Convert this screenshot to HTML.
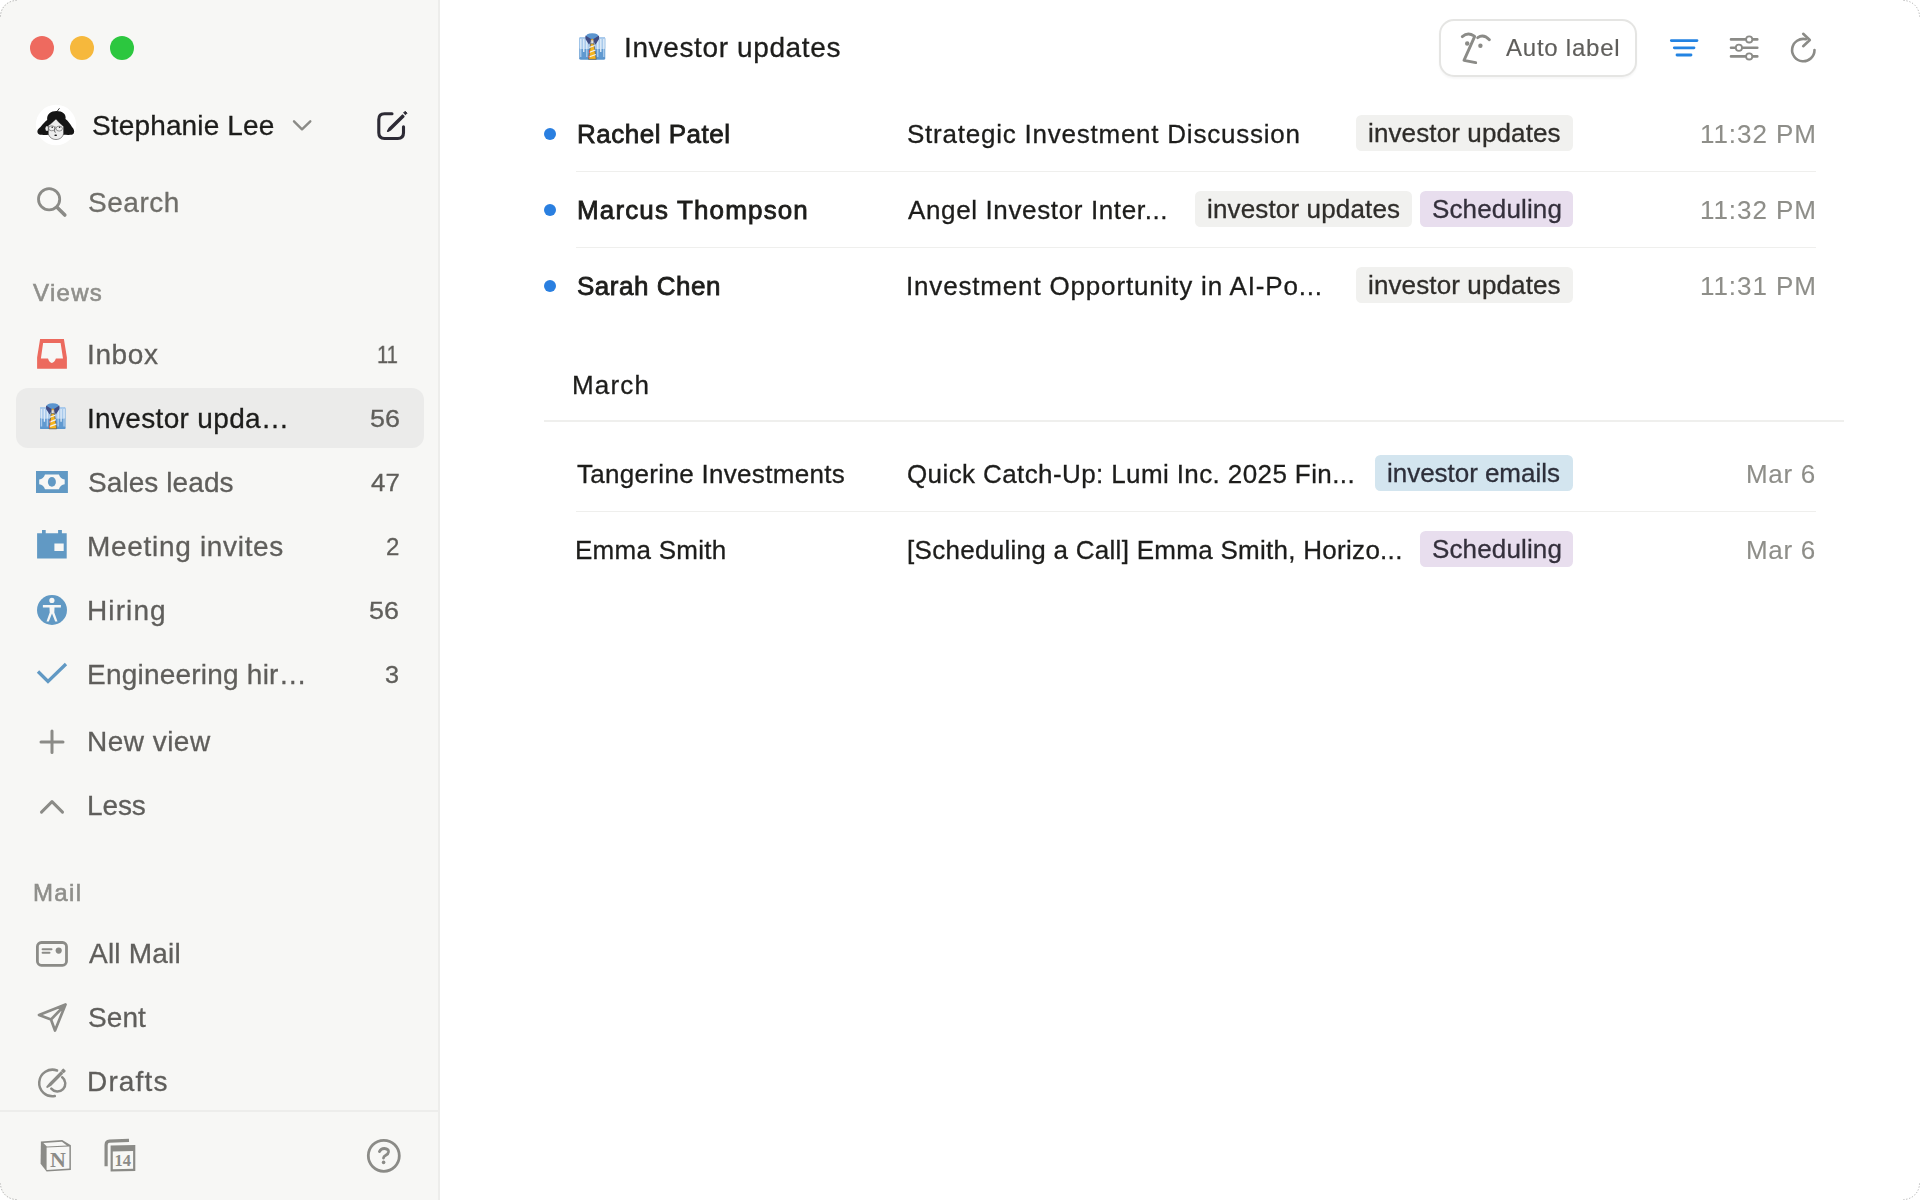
<!DOCTYPE html>
<html><head><meta charset="utf-8">
<style>
html,body{margin:0;padding:0;width:1920px;height:1200px;overflow:hidden;background:#ffffff;}
body{font-family:"Liberation Sans",sans-serif;position:relative;}
.win{position:absolute;left:0;top:0;width:1920px;height:1200px;border-radius:16px;overflow:hidden;background:#fff;}
.side{position:absolute;left:0;top:0;width:438px;height:1200px;background:#f7f7f5;border-right:2px solid #ededeb;}
.t{position:absolute;white-space:nowrap;will-change:transform;}
.abs{position:absolute;}
svg{position:absolute;overflow:visible;}
</style></head><body>
<div class="win">
<div class="side"></div>
<div class="abs" style="left:30px;top:36px;width:24px;height:24px;border-radius:50%;background:#ee6a5f;"></div>
<div class="abs" style="left:70px;top:36px;width:24px;height:24px;border-radius:50%;background:#f6b83c;"></div>
<div class="abs" style="left:110px;top:36px;width:24px;height:24px;border-radius:50%;background:#2cc73f;"></div>
<svg style="left:36px;top:105px" width="40" height="40" viewBox="0 0 40 40">
<circle cx="20" cy="20" r="20.2" fill="#ffffff"/>
<path d="M11.2 15 C10.5 9 15 6 20.5 6 C26.5 6 30.5 9 29.5 14 C32 16 34 18.5 36 22 C38 24 38.8 26.5 37.8 28.2 C37 29.6 35.5 30 34 29.8 C32 30.3 30 29.8 27.5 29.8 L12.5 29.8 C10.5 30 8 30.3 6 29.8 C3.5 30 2 29 1.5 27.5 C0.8 25.5 2.5 23.5 4.5 22 C7 19 9 16.5 11.2 15 Z" fill="#151515"/>
<ellipse cx="11" cy="23.5" rx="1.6" ry="2.6" fill="#ececec"/>
<path d="M20 14 C17.5 16 15 19 12.3 20.5 L12.3 28.5 C13 32 16 34.5 20 34.5 C24 34.5 27 32 27.6 28.5 L27.6 21.5 C25 19.5 22 16.5 20 14 Z" fill="#ececec" stroke="#222" stroke-width="0.5"/>
<ellipse cx="15.8" cy="23.3" rx="3.2" ry="2.5" fill="none" stroke="#555" stroke-width="0.6"/>
<ellipse cx="23.2" cy="23.6" rx="3.2" ry="2.5" fill="none" stroke="#555" stroke-width="0.6"/>
<circle cx="16.2" cy="22.2" r="0.8" fill="#222"/><circle cx="23.6" cy="22.2" r="0.8" fill="#222"/>
<path d="M19.2 21.5 L18.4 26.8 L20 27.3" fill="none" stroke="#333" stroke-width="0.6"/>
<ellipse cx="19.7" cy="30.2" rx="1.4" ry="0.8" fill="#111"/>
<path d="M21 6.5 L23.5 3.2" stroke="#222" stroke-width="0.9"/>
</svg>
<div class="t" style="left:92.3px;top:111.50px;font-size:28px;line-height:28px;color:#1d1d1b;font-weight:400;letter-spacing:0.142px;-webkit-text-stroke:0.3px #1d1d1b;">Stephanie Lee</div>
<svg style="left:290px;top:115px" width="24" height="20" viewBox="290 115 24 20"><path d="M294 121.3 L302 129.3 L310.3 121.3" fill="none" stroke="#8b8b87" stroke-width="2.4" stroke-linecap="round" stroke-linejoin="round"/></svg>
<svg style="left:370px;top:105px" width="44" height="44" viewBox="370 105 44 44">
<path d="M392 113.8 L384.5 113.8 Q378.8 113.8 378.8 119.5 L378.8 132.8 Q378.8 138.5 384.5 138.5 L397.8 138.5 Q403.5 138.5 403.5 132.8 L403.5 126.7" fill="none" stroke="#2d2b35" stroke-width="3.1" stroke-linecap="round"/>
<path d="M402.5 115.3 L389.3 128.5 L387.8 131.2 L390.5 129.7 L403.7 116.5 Z" fill="#2d2b35" stroke="#2d2b35" stroke-width="1.8" stroke-linejoin="round"/>
<path d="M405.2 111.3 L407 113.2 L405.5 114.7 L403.6 112.9 Z" fill="#2d2b35" stroke="#2d2b35" stroke-width="1"/>
</svg>
<svg style="left:30px;top:180px" width="45" height="45" viewBox="30 180 45 45">
<circle cx="49.1" cy="199.3" r="10.6" fill="none" stroke="#8b8b87" stroke-width="2.8"/>
<path d="M57 207.3 L64.8 215" stroke="#8b8b87" stroke-width="3.6" stroke-linecap="round"/>
</svg>
<div class="t" style="left:87.6px;top:188.60px;font-size:28px;line-height:28px;color:#6f6e69;font-weight:400;letter-spacing:0.54px;-webkit-text-stroke:0.3px #6f6e69;">Search</div>
<div class="t" style="left:33px;top:281.08px;font-size:24px;line-height:24px;color:#8f8f8b;font-weight:400;letter-spacing:1.312px;-webkit-text-stroke:0.6px #8f8f8b;">Views</div>
<div class="abs" style="left:16px;top:388px;width:408px;height:60px;border-radius:12px;background:#ebebea;"></div>
<div class="t" style="left:87.2px;top:340.90px;font-size:28px;line-height:28px;color:#5f5e5b;font-weight:400;letter-spacing:0.625px;-webkit-text-stroke:0.3px #5f5e5b;">Inbox</div>
<div class="t" style="left:377.1608695652174px;top:342.68px;font-size:24px;line-height:24px;color:#5f5e5a;font-weight:400;letter-spacing:0px;-webkit-text-stroke:0.3px #5f5e5a;transform:scaleX(0.839);transform-origin:0 0;">11</div>
<div class="t" style="left:87.2px;top:404.90px;font-size:28px;line-height:28px;color:#1d1d1b;font-weight:400;letter-spacing:0.331px;-webkit-text-stroke:0.3px #1d1d1b;">Investor upda…</div>
<div class="t" style="left:369.58px;top:406.68px;font-size:24px;line-height:24px;color:#5f5e5a;font-weight:400;letter-spacing:0px;-webkit-text-stroke:0.3px #5f5e5a;transform:scaleX(1.120);transform-origin:0 0;">56</div>
<div class="t" style="left:88.2px;top:468.90px;font-size:28px;line-height:28px;color:#5f5e5b;font-weight:400;letter-spacing:0.08px;-webkit-text-stroke:0.3px #5f5e5b;">Sales leads</div>
<div class="t" style="left:371.0px;top:470.68px;font-size:24px;line-height:24px;color:#5f5e5a;font-weight:400;letter-spacing:0px;-webkit-text-stroke:0.3px #5f5e5a;transform:scaleX(1.077);transform-origin:0 0;">47</div>
<div class="t" style="left:87.2px;top:532.90px;font-size:28px;line-height:28px;color:#5f5e5b;font-weight:400;letter-spacing:0.686px;-webkit-text-stroke:0.3px #5f5e5b;">Meeting invites</div>
<div class="t" style="left:385.6px;top:534.68px;font-size:24px;line-height:24px;color:#5f5e5a;font-weight:400;letter-spacing:0px;-webkit-text-stroke:0.3px #5f5e5a;transform:scaleX(1.000);transform-origin:0 0;">2</div>
<div class="t" style="left:87.2px;top:596.90px;font-size:28px;line-height:28px;color:#5f5e5b;font-weight:400;letter-spacing:1.1px;-webkit-text-stroke:0.3px #5f5e5b;">Hiring</div>
<div class="t" style="left:369.48px;top:598.68px;font-size:24px;line-height:24px;color:#5f5e5a;font-weight:400;letter-spacing:0px;-webkit-text-stroke:0.3px #5f5e5a;transform:scaleX(1.120);transform-origin:0 0;">56</div>
<div class="t" style="left:87.2px;top:660.90px;font-size:28px;line-height:28px;color:#5f5e5b;font-weight:400;letter-spacing:0.22px;-webkit-text-stroke:0.3px #5f5e5b;">Engineering hir…</div>
<div class="t" style="left:384.95px;top:662.68px;font-size:24px;line-height:24px;color:#5f5e5a;font-weight:400;letter-spacing:0px;-webkit-text-stroke:0.3px #5f5e5a;transform:scaleX(1.050);transform-origin:0 0;">3</div>
<svg style="left:30px;top:332px" width="45" height="45" viewBox="30 332 45 45">
<path d="M40.1 339.1 L63.9 339.1 L66.9 357.5 L66.9 368.7 L37.1 368.7 L37.1 357.5 Z M43.1 342.9 L40.9 358.6 L48 358.6 Q49.5 362.9 51.8 362.9 Q54.2 362.9 55.9 358.6 L63 358.6 L60.6 342.9 Z" fill="#ec6a5e" fill-rule="evenodd"/>
</svg>
<svg style="left:40px;top:402.5px" width="25.5" height="26.5" viewBox="0 0 26 27">
<rect x="0" y="4" width="26" height="22.5" rx="1.8" fill="#6099d0"/>
<rect x="0" y="4" width="26" height="12" rx="1.5" fill="#a9caec"/>
<path d="M1.5 6 v10 M4.5 6 v13 M7.5 7 v9 M18.5 7 v9 M21.5 6 v13 M24.5 6 v10" stroke="#dceaf7" stroke-width="1.4"/>
<path d="M1.5 16 v8 M7.5 16 v8 M18.5 16 v8 M24.5 16 v8" stroke="#a9caec" stroke-width="1.4"/>
<rect x="0" y="24.8" width="26" height="1.7" rx="0.8" fill="#5b96ce"/>
<path d="M6.2 4.5 Q6.5 0.2 13 0.2 Q19.5 0.2 19.8 4.5 L13 7 Z" fill="#5b95cf"/>
<path d="M6.2 2.6 L12.6 6.6 L9.8 11.8 L6.2 6 Z M19.8 2.6 L13.4 6.6 L16.2 11.8 L19.8 6 Z" fill="#404b82"/>
<path d="M11.4 10.5 L14.6 10.5 L17 26.3 L9.3 26.3 Z" fill="#f5b51d" stroke="#5a5a5a" stroke-width="0.7"/>
<path d="M10 14.5 L15.5 12.5 M9.7 19.5 L16.2 17 M9.5 24 L16.6 21.5" stroke="#eef2f8" stroke-width="1.3"/>
<path d="M10.2 17 L10.2 20 M9.8 22.5 L9.8 25" stroke="#e84a3c" stroke-width="0.9"/>
<path d="M11.6 6.4 L14.4 6.4 L14.6 10.8 L11.4 10.8 Z" fill="#dedede" stroke="#5a5a5a" stroke-width="0.6"/>
<circle cx="13" cy="6.6" r="0.9" fill="#f0a020"/>
</svg>
<svg style="left:30px;top:460px" width="45" height="45" viewBox="30 460 45 45">
<path d="M36 470.9 L67.9 470.9 L67.9 493 L36 493 Z M45 474.4 Q43.5 478.8 39.2 479.5 L39.2 484.2 Q43.5 484.8 45 489.2 L58.9 489.2 Q60.4 484.8 64.7 484.2 L64.7 479.5 Q60.4 478.8 58.9 474.4 Z" fill="#6199c4" fill-rule="evenodd"/>
<ellipse cx="51.9" cy="481.9" rx="4" ry="4.8" fill="#6199c4"/>
</svg>
<svg style="left:30px;top:522px" width="45" height="45" viewBox="30 522 45 45">
<path d="M37.1 533.2 L42 533.2 L42 529.9 L45.7 529.9 L45.7 533.2 L58.1 533.2 L58.1 529.9 L61.9 529.9 L61.9 533.2 L66.7 533.2 L66.7 558.6 L37.1 558.6 Z M54.4 543.6 L54.4 550.9 L63.7 550.9 L63.7 543.6 Z" fill="#6199c4" fill-rule="evenodd"/>
</svg>
<svg style="left:30px;top:588px" width="45" height="45" viewBox="30 588 45 45">
<circle cx="52" cy="610" r="15" fill="#6199c4"/>
<circle cx="51.9" cy="600.4" r="2.6" fill="#f7f7f5"/>
<path d="M42.9 605 L60.9 605 L60.9 607.5 L54.5 607.5 L54.3 612.5 L57.5 621.5 L55.2 621.5 L52 613.5 L48.8 621.5 L46.5 621.5 L49.7 612.5 L49.5 607.5 L42.9 607.5 Z" fill="#f7f7f5"/>
</svg>
<svg style="left:30px;top:655px" width="45" height="35" viewBox="30 655 45 35">
<path d="M38 671.5 L48 681.5 L66 664" fill="none" stroke="#6199c4" stroke-width="3.3"/>
</svg>
<svg style="left:30px;top:720px" width="45" height="45" viewBox="30 720 45 45">
<path d="M41 742 L63 742 M52 731 L52 752.5" stroke="#8b8b87" stroke-width="3" stroke-linecap="round"/>
</svg>
<div class="t" style="left:87.2px;top:727.80px;font-size:28px;line-height:28px;color:#5f5e5b;font-weight:400;letter-spacing:0.471px;-webkit-text-stroke:0.3px #5f5e5b;">New view</div>
<svg style="left:30px;top:790px" width="45" height="35" viewBox="30 790 45 35">
<path d="M41.5 812.1 L52 801.6 L62.5 812.1" fill="none" stroke="#8b8b87" stroke-width="3" stroke-linecap="round" stroke-linejoin="round"/>
</svg>
<div class="t" style="left:87.2px;top:792.00px;font-size:28px;line-height:28px;color:#5f5e5b;font-weight:400;letter-spacing:-0.1px;-webkit-text-stroke:0.3px #5f5e5b;">Less</div>
<div class="t" style="left:32.6px;top:881.38px;font-size:24px;line-height:24px;color:#8f8f8b;font-weight:400;letter-spacing:1.333px;-webkit-text-stroke:0.6px #8f8f8b;">Mail</div>
<svg style="left:30px;top:930px" width="45" height="45" viewBox="30 930 45 45">
<rect x="37.4" y="942.5" width="29.1" height="22.8" rx="4" fill="none" stroke="#8b8b87" stroke-width="2.8"/>
<path d="M42.6 949.3 L51.5 949.3 M42.6 952.7 L49.5 952.7" stroke="#8b8b87" stroke-width="2" stroke-linecap="round"/>
<circle cx="58.7" cy="950.6" r="3.1" fill="#8b8b87"/>
</svg>
<div class="t" style="left:89.2px;top:940.00px;font-size:28px;line-height:28px;color:#5f5e5b;font-weight:400;letter-spacing:0.2px;-webkit-text-stroke:0.3px #5f5e5b;">All Mail</div>
<svg style="left:30px;top:995px" width="45" height="45" viewBox="30 995 45 45">
<path d="M65.5 1004.5 L39 1015 L51 1019.5 L55 1030.5 Z M65.5 1004.5 L51 1019.5" fill="none" stroke="#8b8b87" stroke-width="2.7" stroke-linejoin="round" stroke-linecap="round"/>
</svg>
<div class="t" style="left:88.2px;top:1004.00px;font-size:28px;line-height:28px;color:#5f5e5b;font-weight:400;letter-spacing:0.067px;-webkit-text-stroke:0.3px #5f5e5b;">Sent</div>
<svg style="left:30px;top:1060px" width="45" height="45" viewBox="30 1060 45 45">
<path d="M57.05 1070.5 A13.3 13.3 0 1 0 54.8 1096.1" fill="none" stroke="#8b8b87" stroke-width="2.5" stroke-linecap="round"/>
<path d="M51.3 1088.6 A7.9 7.9 0 1 0 62.2 1077.3" fill="none" stroke="#8b8b87" stroke-width="2.5" stroke-linecap="round"/>
<path d="M61.3 1072.2 L50.2 1083.5 L47.3 1086.9 L50.8 1084.9 L62 1073.6 Z" fill="#8b8b87" stroke="#8b8b87" stroke-width="2" stroke-linejoin="round"/>
<path d="M63.3 1069.2 L65.1 1071 L63.6 1072.5 L61.8 1070.7 Z" fill="#8b8b87" stroke="#8b8b87" stroke-width="1.2" stroke-linejoin="round"/>
</svg>
<div class="t" style="left:87.2px;top:1067.90px;font-size:28px;line-height:28px;color:#5f5e5b;font-weight:400;letter-spacing:1.16px;-webkit-text-stroke:0.3px #5f5e5b;">Drafts</div>
<div class="abs" style="left:0;top:1110px;width:438px;height:2px;background:#ededeb;"></div>
<svg style="left:36px;top:1135px" width="45" height="45" viewBox="36 1135 45 45">
<path d="M40.9 1141.6 L62.2 1140 L70.9 1145.3 L70.9 1170 L46.6 1171.6 L40.6 1163.8 Z" fill="#8b8b87"/>
<path d="M46.6 1147.6 L69.4 1146.4 L69.4 1168.6 L46.6 1169.9 Z" fill="#f7f7f5"/>
<path d="M43.4 1143.1 L61.9 1141.7 L66.9 1145.4 L46.9 1146.6 Z" fill="#f7f7f5"/>
<text x="58" y="1166.6" font-family="Liberation Serif" font-weight="700" font-size="22" fill="#8b8b87" text-anchor="middle">N</text>
</svg>
<svg style="left:100px;top:1135px" width="45" height="45" viewBox="100 1135 45 45">
<path d="M106.1 1166.3 L106.1 1145 Q106.1 1141.4 109.5 1141.2 L129 1140.3" fill="none" stroke="#8b8b87" stroke-width="3.2"/>
<path d="M110.6 1145.6 L135.3 1144.9 L135.3 1170.9 L110.6 1171.6 Z" fill="#8b8b87"/>
<path d="M112.8 1151.4 L133.1 1150.9 L133.1 1168.7 L112.8 1169.3 Z" fill="#f7f7f5"/>
<text x="122.8" y="1166.3" font-family="Liberation Serif" font-weight="700" font-size="16.5" fill="#8b8b87" text-anchor="middle">14</text>
</svg>
<svg style="left:360px;top:1135px" width="45" height="45" viewBox="360 1135 45 45">
<circle cx="383.8" cy="1155.8" r="15.5" fill="none" stroke="#8b8b87" stroke-width="2.8"/>
<path d="M379.4 1151.6 Q381 1148.4 384.4 1148.5 Q388.6 1148.8 388.5 1151.9 Q388.3 1154 385.8 1155.3 Q383.6 1156.5 383.5 1158" fill="none" stroke="#8b8b87" stroke-width="2.8" stroke-linecap="round"/>
<circle cx="383.6" cy="1162.4" r="1.8" fill="#8b8b87"/>
</svg>
<svg style="left:579px;top:33px" width="26.5" height="27" viewBox="0 0 26 27">
<rect x="0" y="4" width="26" height="22.5" rx="1.8" fill="#6099d0"/>
<rect x="0" y="4" width="26" height="12" rx="1.5" fill="#a9caec"/>
<path d="M1.5 6 v10 M4.5 6 v13 M7.5 7 v9 M18.5 7 v9 M21.5 6 v13 M24.5 6 v10" stroke="#dceaf7" stroke-width="1.4"/>
<path d="M1.5 16 v8 M7.5 16 v8 M18.5 16 v8 M24.5 16 v8" stroke="#a9caec" stroke-width="1.4"/>
<rect x="0" y="24.8" width="26" height="1.7" rx="0.8" fill="#5b96ce"/>
<path d="M6.2 4.5 Q6.5 0.2 13 0.2 Q19.5 0.2 19.8 4.5 L13 7 Z" fill="#5b95cf"/>
<path d="M6.2 2.6 L12.6 6.6 L9.8 11.8 L6.2 6 Z M19.8 2.6 L13.4 6.6 L16.2 11.8 L19.8 6 Z" fill="#404b82"/>
<path d="M11.4 10.5 L14.6 10.5 L17 26.3 L9.3 26.3 Z" fill="#f5b51d" stroke="#5a5a5a" stroke-width="0.7"/>
<path d="M10 14.5 L15.5 12.5 M9.7 19.5 L16.2 17 M9.5 24 L16.6 21.5" stroke="#eef2f8" stroke-width="1.3"/>
<path d="M10.2 17 L10.2 20 M9.8 22.5 L9.8 25" stroke="#e84a3c" stroke-width="0.9"/>
<path d="M11.6 6.4 L14.4 6.4 L14.6 10.8 L11.4 10.8 Z" fill="#dedede" stroke="#5a5a5a" stroke-width="0.6"/>
<circle cx="13" cy="6.6" r="0.9" fill="#f0a020"/>
</svg>
<div class="t" style="left:623.6px;top:34.10px;font-size:28px;line-height:28px;color:#1d1d1b;font-weight:400;letter-spacing:0.627px;-webkit-text-stroke:0.3px #1d1d1b;">Investor updates</div>
<div class="abs" style="left:1439px;top:18.5px;width:194px;height:54px;border:2px solid #e5e5e3;border-radius:15px;background:#fff;box-shadow:0 1.5px 2px rgba(0,0,0,0.035);"></div>
<svg style="left:1455px;top:28px" width="40" height="40" viewBox="1455 28 40 40">
<path d="M1462.3 36.6 Q1467.8 31.8 1474 35.9" fill="none" stroke="#8b8b87" stroke-width="2.9" stroke-linecap="round"/>
<path d="M1477.7 37.6 Q1483.6 33.6 1489.4 39.8" fill="none" stroke="#8b8b87" stroke-width="2.9" stroke-linecap="round"/>
<circle cx="1467.2" cy="43.5" r="2.2" fill="#8b8b87"/>
<circle cx="1480.4" cy="45.7" r="2.2" fill="#8b8b87"/>
<path d="M1474.6 36.6 L1464 60.3 L1475.7 62.6" fill="none" stroke="#8b8b87" stroke-width="2.9" stroke-linecap="round" stroke-linejoin="round"/>
</svg>
<div class="t" style="left:1505.6px;top:36.48px;font-size:24px;line-height:24px;color:#5f5e5b;font-weight:400;letter-spacing:0.767px;-webkit-text-stroke:0.15px #5f5e5b;">Auto label</div>
<svg style="left:1660px;top:30px" width="45" height="35" viewBox="1660 30 45 35">
<path d="M1671.3 40.6 L1697 40.6 M1674.3 47.8 L1694 47.8 M1677 55 L1691 55" stroke="#2383e2" stroke-width="2.8" stroke-linecap="round"/>
</svg>
<svg style="left:1722px;top:28px" width="45" height="40" viewBox="1722 28 45 40">
<path d="M1731 39.4 L1757.3 39.4 M1731 47.8 L1757.3 47.8 M1731 56.4 L1757.3 56.4" stroke="#8b8b87" stroke-width="2.6" stroke-linecap="round"/>
<circle cx="1749.2" cy="39.4" r="3.1" fill="#fff" stroke="#8b8b87" stroke-width="1.8"/>
<circle cx="1738.9" cy="47.8" r="3.1" fill="#fff" stroke="#8b8b87" stroke-width="1.8"/>
<circle cx="1749.2" cy="56.4" r="3.1" fill="#fff" stroke="#8b8b87" stroke-width="1.8"/>
</svg>
<svg style="left:1785px;top:28px" width="40" height="40" viewBox="1785 28 40 40">
<path d="M1814.5 50 A11.2 11.2 0 1 1 1806 39.2" fill="none" stroke="#8b8b87" stroke-width="2.6" stroke-linecap="round"/>
<path d="M1803.2 33.8 L1809.8 40 L1803.2 46.2" fill="none" stroke="#8b8b87" stroke-width="2.6" stroke-linecap="round" stroke-linejoin="round"/>
</svg>
<div class="abs" style="left:544px;top:128px;width:12px;height:12px;border-radius:50%;background:#2a7fe0;"></div>
<div class="t" style="left:576.7px;top:120.99px;font-size:26px;line-height:26px;color:#1d1d1b;font-weight:400;letter-spacing:0.5px;-webkit-text-stroke:0.8px #1d1d1b;">Rachel Patel</div>
<div class="t" style="left:907.2px;top:120.99px;font-size:26px;line-height:26px;color:#1d1d1b;font-weight:400;letter-spacing:0.767px;-webkit-text-stroke:0.3px #1d1d1b;">Strategic Investment Discussion</div>
<div class="abs" style="left:1356px;top:115.0px;width:217px;height:35.75px;border-radius:5.5px;background:#f1f1ef;"></div>
<div class="t" style="left:1367.9px;top:120.29px;font-size:26px;line-height:26px;color:#2f2d2a;font-weight:400;letter-spacing:0.12px;-webkit-text-stroke:0.3px #2f2d2a;">investor updates</div>
<div class="t" style="left:1700px;top:120.99px;font-size:26px;line-height:26px;color:#8e8e89;font-weight:400;letter-spacing:0.929px;-webkit-text-stroke:0.1px #8e8e89;">11:32 PM</div>
<div class="abs" style="left:544px;top:204px;width:12px;height:12px;border-radius:50%;background:#2a7fe0;"></div>
<div class="t" style="left:576.7px;top:196.99px;font-size:26px;line-height:26px;color:#1d1d1b;font-weight:400;letter-spacing:1.143px;-webkit-text-stroke:0.8px #1d1d1b;">Marcus Thompson</div>
<div class="t" style="left:908.2px;top:196.99px;font-size:26px;line-height:26px;color:#1d1d1b;font-weight:400;letter-spacing:0.632px;-webkit-text-stroke:0.3px #1d1d1b;">Angel Investor Inter...</div>
<div class="abs" style="left:1195px;top:191.0px;width:217px;height:35.75px;border-radius:5.5px;background:#f1f1ef;"></div>
<div class="t" style="left:1206.8px;top:196.29px;font-size:26px;line-height:26px;color:#2f2d2a;font-weight:400;letter-spacing:0.147px;-webkit-text-stroke:0.3px #2f2d2a;">investor updates</div>
<div class="abs" style="left:1420px;top:191.0px;width:153px;height:35.75px;border-radius:5.5px;background:#e8deee;"></div>
<div class="t" style="left:1431.5px;top:196.29px;font-size:26px;line-height:26px;color:#34303c;font-weight:400;letter-spacing:0.133px;-webkit-text-stroke:0.3px #34303c;">Scheduling</div>
<div class="t" style="left:1700px;top:196.99px;font-size:26px;line-height:26px;color:#8e8e89;font-weight:400;letter-spacing:0.929px;-webkit-text-stroke:0.1px #8e8e89;">11:32 PM</div>
<div class="abs" style="left:544px;top:280px;width:12px;height:12px;border-radius:50%;background:#2a7fe0;"></div>
<div class="t" style="left:576.7px;top:272.99px;font-size:26px;line-height:26px;color:#1d1d1b;font-weight:400;letter-spacing:0.522px;-webkit-text-stroke:0.8px #1d1d1b;">Sarah Chen</div>
<div class="t" style="left:906.2px;top:272.99px;font-size:26px;line-height:26px;color:#1d1d1b;font-weight:400;letter-spacing:0.827px;-webkit-text-stroke:0.3px #1d1d1b;">Investment Opportunity in AI-Po...</div>
<div class="abs" style="left:1356px;top:267.0px;width:217px;height:35.75px;border-radius:5.5px;background:#f1f1ef;"></div>
<div class="t" style="left:1367.9px;top:272.29px;font-size:26px;line-height:26px;color:#2f2d2a;font-weight:400;letter-spacing:0.12px;-webkit-text-stroke:0.3px #2f2d2a;">investor updates</div>
<div class="t" style="left:1700px;top:272.99px;font-size:26px;line-height:26px;color:#8e8e89;font-weight:400;letter-spacing:0.929px;-webkit-text-stroke:0.1px #8e8e89;">11:31 PM</div>
<div class="t" style="left:577.1px;top:460.99px;font-size:26px;line-height:26px;color:#1d1d1b;font-weight:400;letter-spacing:0.305px;-webkit-text-stroke:0.3px #1d1d1b;">Tangerine Investments</div>
<div class="t" style="left:907.2px;top:460.99px;font-size:26px;line-height:26px;color:#1d1d1b;font-weight:400;letter-spacing:0.392px;-webkit-text-stroke:0.3px #1d1d1b;">Quick Catch-Up: Lumi Inc. 2025 Fin...</div>
<div class="abs" style="left:1375px;top:455.0px;width:198px;height:35.75px;border-radius:5.5px;background:#d3e5ef;"></div>
<div class="t" style="left:1387.2px;top:460.29px;font-size:26px;line-height:26px;color:#2d2f3a;font-weight:400;letter-spacing:-0.036px;-webkit-text-stroke:0.3px #2d2f3a;">investor emails</div>
<div class="t" style="left:1745.8px;top:460.99px;font-size:26px;line-height:26px;color:#8e8e89;font-weight:400;letter-spacing:0.675px;-webkit-text-stroke:0.1px #8e8e89;">Mar 6</div>
<div class="t" style="left:575.1px;top:536.99px;font-size:26px;line-height:26px;color:#1d1d1b;font-weight:400;letter-spacing:0.278px;-webkit-text-stroke:0.3px #1d1d1b;">Emma Smith</div>
<div class="t" style="left:907.2px;top:536.99px;font-size:26px;line-height:26px;color:#1d1d1b;font-weight:400;letter-spacing:0.282px;-webkit-text-stroke:0.3px #1d1d1b;">[Scheduling a Call] Emma Smith, Horizo...</div>
<div class="abs" style="left:1420px;top:531.0px;width:153px;height:35.75px;border-radius:5.5px;background:#e8deee;"></div>
<div class="t" style="left:1431.5px;top:536.29px;font-size:26px;line-height:26px;color:#34303c;font-weight:400;letter-spacing:0.133px;-webkit-text-stroke:0.3px #34303c;">Scheduling</div>
<div class="t" style="left:1745.8px;top:536.99px;font-size:26px;line-height:26px;color:#8e8e89;font-weight:400;letter-spacing:0.675px;-webkit-text-stroke:0.1px #8e8e89;">Mar 6</div>
<div class="abs" style="left:576px;top:171px;width:1240px;height:1px;background:#efefed;"></div>
<div class="abs" style="left:576px;top:247px;width:1240px;height:1px;background:#efefed;"></div>
<div class="abs" style="left:576px;top:511px;width:1240px;height:1px;background:#efefed;"></div>
<div class="t" style="left:571.7px;top:371.89px;font-size:26px;line-height:26px;color:#1d1d1b;font-weight:400;letter-spacing:1.15px;-webkit-text-stroke:0.3px #1d1d1b;">March</div>
<div class="abs" style="left:544px;top:420px;width:1300px;height:2px;background:#efefed;"></div>
</div>
<svg style="left:0;top:0" width="1920" height="1200" viewBox="0 0 1920 1200">
<g fill="none" stroke="#8a8a8a" stroke-width="0.9" stroke-dasharray="1.2 1.8" opacity="0.75">
<path d="M0.5 16.5 A16 16 0 0 1 16.5 0.5"/>
<path d="M1903.5 0.5 A16 16 0 0 1 1919.5 16.5"/>
<path d="M1919.5 1183.5 A16 16 0 0 1 1903.5 1199.5"/>
<path d="M16.5 1199.5 A16 16 0 0 1 0.5 1183.5"/>
</g></svg>
</body></html>
